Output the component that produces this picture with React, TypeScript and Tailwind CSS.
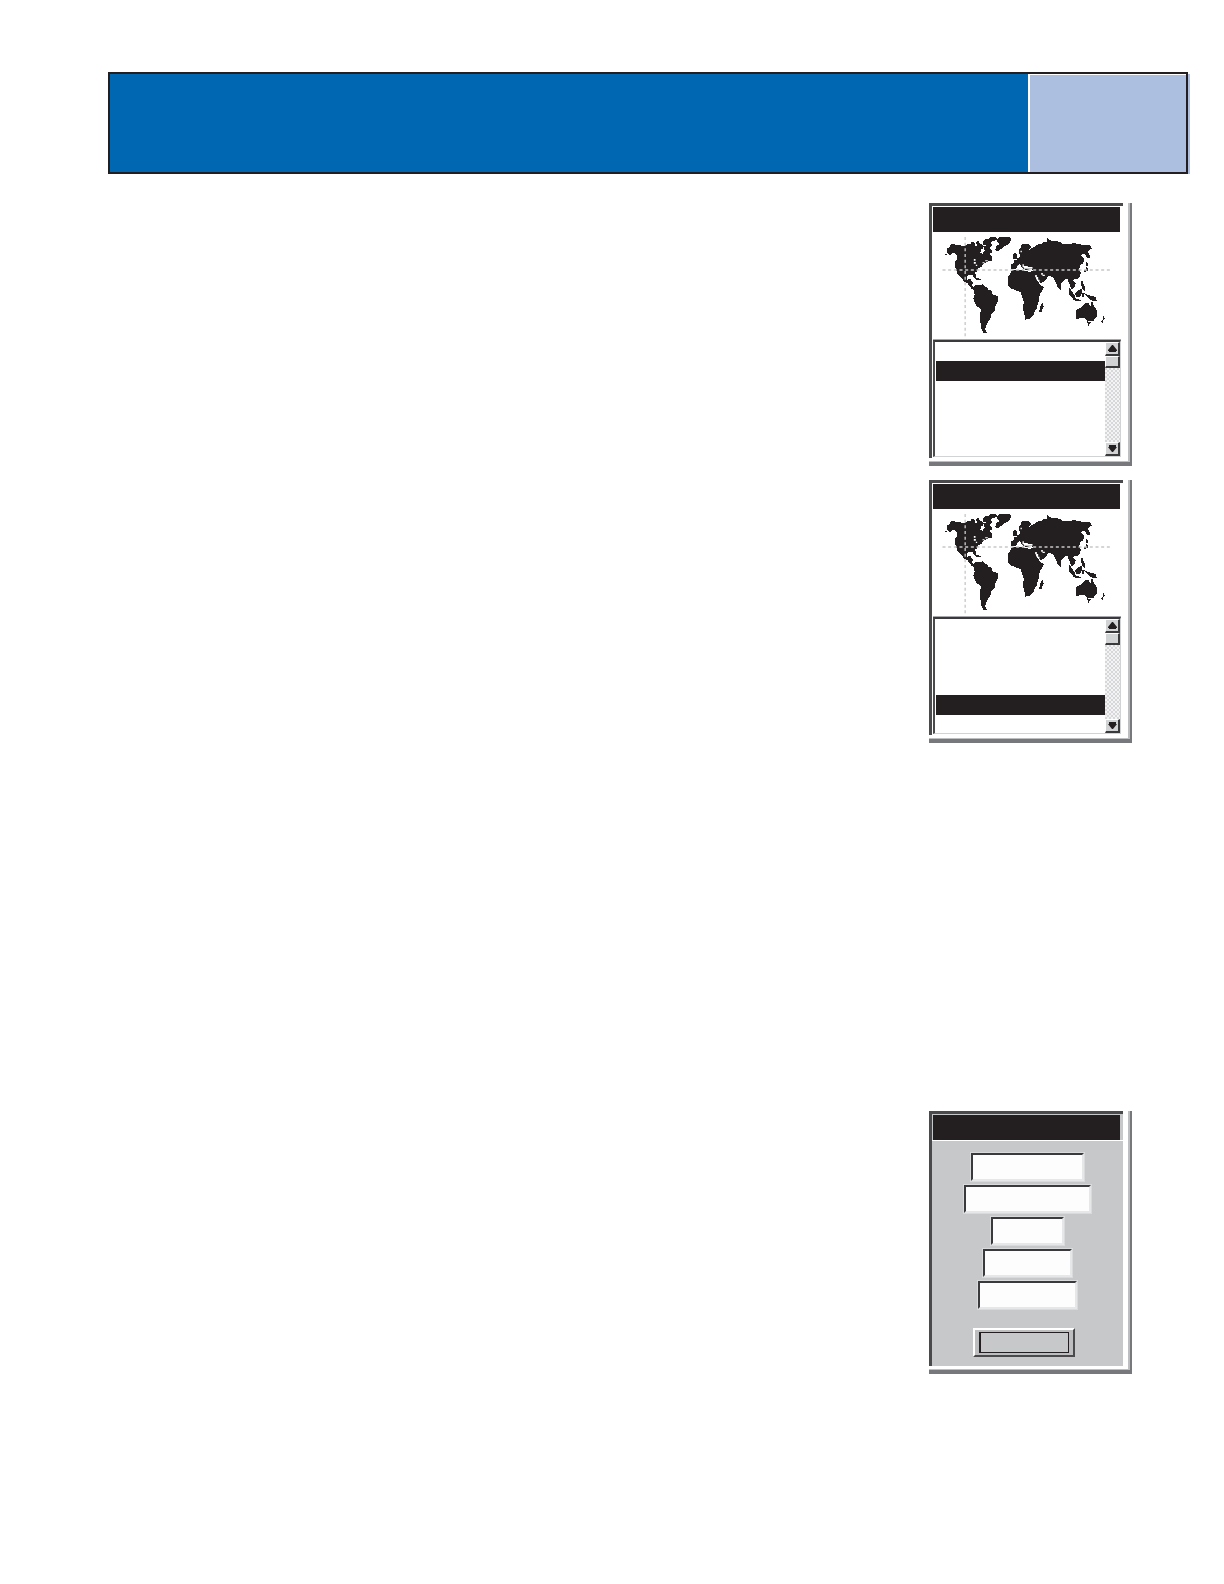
import type { ReactNode } from "react";
import clsx from "clsx";

const LAND = [
  // North and Central America
  "80,170 82,160 90,158 90,151 98,148 106,151 120,153 134,153 140,150 148,148 160,154 168,156 176,148 184,150 187,158 180,164 178,174 186,178 194,168 204,174 212,184 214,198 206,196 198,200 188,206 182,214 172,218 168,228 162,232 166,246 162,248 158,238 142,238 136,246 140,256 148,252 152,258 156,264 152,272 160,278 154,280 146,270 142,264 130,258 126,248 120,244 112,236 108,222 104,216 106,200 112,192 110,180 104,174 96,172 88,180 84,176",
  // Arctic islands
  "188,140 194,134 206,132 210,128 226,128 228,134 214,138 208,142 214,150 208,156 202,158 196,150 190,148",
  "190,154 204,160 212,166 214,172 206,174 200,168 192,164",
  "168,142 174,140 176,146 170,148",
  "152,144 160,142 164,150 156,152",
  // Greenland
  "226,164 228,154 236,150 236,144 230,136 236,128 242,126 268,126 270,134 268,140 260,148 248,154 242,160 234,166 228,167",
  // South America
  "158,280 166,272 186,270 192,276 200,280 202,286 212,288 214,298 232,306 232,318 224,330 222,346 212,354 208,370 202,378 196,392 192,404 198,412 190,412 184,402 184,392 180,380 182,342 168,330 160,312 164,298 162,288",
  // Africa
  "274,228 306,226 312,230 330,232 344,226 352,226 348,238 346,250 352,262 358,272 368,276 364,288 356,298 354,318 350,326 348,338 342,348 336,362 328,370 316,372 312,354 308,338 312,322 306,306 302,290 284,284 270,278 264,270 264,246 270,238",
  "366,326 368,334 362,350 358,350 360,336",
  // Europe and Asia
  "274,220 274,208 284,206 282,198 292,194 300,184 298,176 296,164 302,158 306,148 322,148 330,156 324,164 326,170 334,160 344,156 352,150 366,148 370,142 382,142 382,132 390,138 406,140 418,142 430,150 462,146 480,150 508,152 512,160 504,166 500,172 506,180 508,188 500,186 494,176 484,174 480,184 490,192 486,204 478,210 478,218 472,222 480,232 476,246 470,250 458,252 456,258 464,266 460,278 454,280 446,262 444,252 436,248 430,256 420,264 420,284 414,278 408,264 402,250 394,244 382,240 378,250 368,260 360,262 354,252 350,240 346,228 336,222 328,220 322,224 316,224 306,218 300,206 292,208 286,220",
  "278,178 286,174 290,190 280,190",
  // Japan
  "497,202 501,206 501,212 497,212",
  "499,218 503,222 499,227 491,229 497,224",
  // South-east Asia
  "446,280 452,288 462,304 460,310 452,304 446,294",
  "464,296 474,286 482,284 483,294 478,305 468,304",
  "483,259 486,261 488,268 493,276 492,285 487,281 484,270",
  "459,309 470,313 480,317 470,317 460,314",
  "487,295 491,295 488,300 489,305 485,303",
  "497,299 508,303 524,307 527,317 518,317 504,308",
  // Australia
  "468,346 480,340 490,332 496,324 504,324 504,332 512,334 514,320 520,336 528,346 528,362 518,376 508,378 500,376 494,366 480,368 468,370",
  "502,381 508,383 504,389",
  "549,367 551,370 549,373",
  "543,379 545,377 545,381",
  "75,177 78,177 78,179 75,179",
  "161,248 170,250 180,253 170,254",
];

const WATER = [
  // Great Lakes and the St Lawrence
  "M160 192h5v5h-5z M160 201h6v5h-6z M166 209h4v4h-4z M194 196h8v3h-8z M186 202h6v3h-6z",
  // Mediterranean, Black Sea, Baltic
  "M306 208h4v5h12v3h14v5h-26v-4h-4z M290 212h6v6h-6z M300 167h4v5h-4z",
  // Red Sea and Persian Gulf
  "M344 240h5v6h4v8h4v6h-4v-5h-5v-8h-4z M362 234h5v5h6v4h-7v-4h-4z",
].join(" ");

function WorldMap() {
  return (
    <svg
      viewBox="36 111 570 321"
      className="block h-[107px] w-full bg-white"
      role="img"
      aria-label="World map"
    >
      <g fill="#231f20" stroke="#231f20" strokeWidth="3" shapeRendering="crispEdges">
        {LAND.map((points) => (
          <polygon key={points} points={points} />
        ))}
      </g>
      <path d={WATER} fill="#fff" />
      <g stroke="#c8c8c8" strokeWidth="4" strokeDasharray="9 8">
        <path d="M66 225H570" />
        <path d="M134 126V428" />
      </g>
    </svg>
  );
}

function Device({ gray, children }: { gray?: boolean; children: ReactNode }) {
  return (
    <section className="w-[203px] border-r-2 border-b-4 border-[#77787b]">
      <div className="border-r-2 border-b border-[#bcbec0] bg-white pr-[5px] pb-[3px]">
        <div
          className={clsx(
            "flex h-[255px] flex-col border-t-3 border-l-3 border-[#4a4a4c]",
            gray ? "bg-[#c7c8ca]" : "bg-white",
          )}
        >
          <div className="mt-px mr-[3px] ml-px h-[25px] shrink-0 bg-[#231f20]" />
          {children}
        </div>
      </div>
    </section>
  );
}

function ScrollButton({ down }: { down?: boolean }) {
  return (
    <button
      type="button"
      aria-label={down ? "Scroll down" : "Scroll up"}
      className="flex h-[14px] w-full items-center justify-center border-t border-r-2 border-b-2 border-l border-t-white border-r-[#3a3a3c] border-b-[#3a3a3c] border-l-white bg-[#d1d3d4]"
    >
      <svg viewBox="0 0 9 7" className="h-[7px] w-[9px]" fill="#231f20">
        {down ? <path d="M1 0h7v2h1L5 7H4L0 2h1z" /> : <path d="M4 0h1l4 5v1H8v1H1V6H0V5z" />}
      </svg>
    </button>
  );
}

function CityList({ selected }: { selected: number }) {
  return (
    <div className="mr-[2px] ml-px border-t border-[#a7a9ac]">
      <div className="flex border-t-2 border-r border-b border-l-2 border-t-[#3a3a3c] border-r-[#d1d3d4] border-b-[#d1d3d4] border-l-[#4a4a4c] bg-white">
        <ul className="h-[114px] min-w-0 flex-1 overflow-hidden pl-px">
          {[0, 1, 2, 3, 4, 5].map((row) => (
            <li key={row} className={row === selected ? "h-5 bg-[#231f20]" : "h-[19px]"} />
          ))}
        </ul>
        <div className="flex w-[15px] flex-col bg-[repeating-conic-gradient(#d6d7d8_0_25%,#f4f4f4_0_50%)] bg-[length:4px_4px]">
          <ScrollButton />
          <div className="h-3 border-t border-r-2 border-b-2 border-l border-t-white border-r-[#3a3a3c] border-b-[#3a3a3c] border-l-white bg-[#d1d3d4]" />
          <div className="flex-1" />
          <ScrollButton down />
        </div>
      </div>
    </div>
  );
}

const FIELDS = [
  { label: "Name", width: "w-[113px]" },
  { label: "Position", width: "w-[127px]" },
  { label: "Distance", width: "w-[73px]" },
  { label: "Bearing", width: "w-[89px]" },
  { label: "Elevation", width: "w-[99px]" },
];

function EntryForm() {
  return (
    <form className="flex flex-1 flex-col items-center border-t border-white pt-3">
      <div className="flex flex-col items-center gap-1">
        {FIELDS.map((field) => (
          <input
            key={field.label}
            type="text"
            aria-label={field.label}
            className={clsx(
              "h-7 border-2 border-t-[#3a3a3c] border-r-[#e6e7e8] border-b-[#e6e7e8] border-l-[#3a3a3c] bg-[#fdfdfd] outline-1 outline-[#d9dadb]",
              field.width,
            )}
          />
        ))}
      </div>
      <button
        type="button"
        aria-label="OK"
        className="mt-[19px] mr-2 h-[29px] w-[102px] border-2 border-t-white border-r-[#4a4a4c] border-b-[#4a4a4c] border-l-white bg-[#bcbec0] px-1 py-[2px]"
      >
        <span className="block h-full border border-l-2 border-[#231f20] bg-[#c7c8ca]" />
      </button>
    </form>
  );
}

export default function App() {
  return (
    <div className="min-h-screen bg-white pt-[72px] pb-[210px] font-['Liberation_Sans',sans-serif]">
      <header className="mr-9 ml-[108px] flex h-[102px] border-2 border-[#231f20] bg-[#0068b3] shadow-[3px_1px_0_-1px_#adbfe1]">
        <div className="flex-1" />
        <div className="w-[158px] border-t border-l-2 border-white bg-[#adbfe1]" />
      </header>

      <main className="mt-[29px] mr-[92px] flex flex-col items-end">
        <div className="flex flex-col gap-[14px]">
          <Device>
            <WorldMap />
            <CityList selected={1} />
          </Device>
          <Device>
            <WorldMap />
            <CityList selected={4} />
          </Device>
        </div>
        <div className="mt-[368px]">
          <Device gray>
            <EntryForm />
          </Device>
        </div>
      </main>
    </div>
  );
}
